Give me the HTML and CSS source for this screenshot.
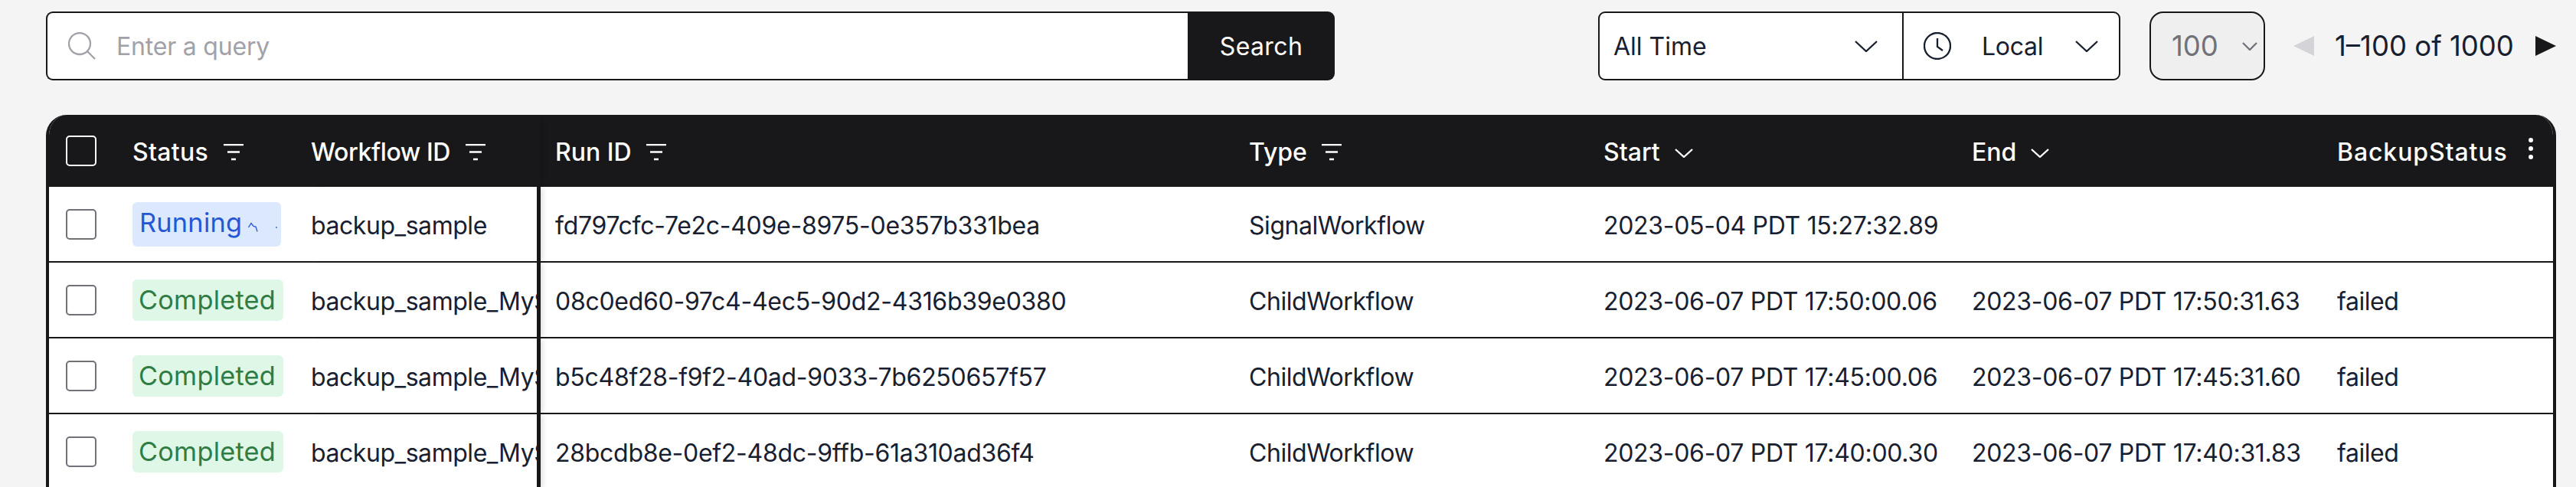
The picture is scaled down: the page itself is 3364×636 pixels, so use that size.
FILE: index.html
```html
<!DOCTYPE html>
<html>
<head>
  <title>Workflows</title>
  <link rel="stylesheet" href="styles.css">
</head>
<body>

  <div class="topbar">
    <div class="search">
      <div class="search-input">
        <svg class="search-icon" viewBox="0 0 36 36"><circle cx="15" cy="15" r="14" /><path d="M25 25l10 10" /></svg>
        <span class="placeholder">Enter a query</span>
      </div>
      <button class="search-btn">Search</button>
    </div>

    <div class="controls">
      <div class="date-filter">
        <div class="range">
          <span>All Time</span>
          <svg class="chev" viewBox="0 0 30 15"><path d="M1 1l14 13L29 1" /></svg>
        </div>
        <div class="zone">
          <svg class="clock" viewBox="0 0 36 36"><circle cx="18" cy="18" r="17" /><path d="M18 8v11l7 5" /></svg>
          <span>Local</span>
          <svg class="chev" viewBox="0 0 30 15"><path d="M1 1l14 13L29 1" /></svg>
        </div>
      </div>

      <div class="per-page">
        <span>100</span>
        <svg viewBox="0 0 20 11"><path d="M1 1l9 9 9-9" /></svg>
      </div>

      <div class="pager">
        <span class="tri prev"></span>
        <span class="pager-text">1–100 of 1000</span>
        <span class="tri next"></span>
      </div>
    </div>
  </div>

  <div class="table-wrap">
    <table>
      <colgroup>
        <col class="c-check"><col class="c-status"><col class="c-wf"><col class="c-run">
        <col class="c-type"><col class="c-start"><col class="c-end"><col class="c-backup">
      </colgroup>
      <thead>
        <tr>
          <th class="check-cell"><span class="box box-head"></span></th>
          <th><span class="head head-status">Status <svg class="filter" viewBox="0 0 26 22"><path d="M0 1h26M5 10.500h16M10 20h6" /></svg></span></th>
          <th class="sticky"><span class="head head-wf">Workflow ID <svg class="filter" viewBox="0 0 26 22"><path d="M0 1h26M5 10.500h16M10 20h6" /></svg></span></th>
          <th class="run-cell"><span class="head">Run ID <svg class="filter" viewBox="0 0 26 22"><path d="M0 1h26M5 10.500h16M10 20h6" /></svg></span></th>
          <th><span class="head">Type <svg class="filter" viewBox="0 0 26 22"><path d="M0 1h26M5 10.500h16M10 20h6" /></svg></span></th>
          <th><span class="head">Start <svg class="sort" viewBox="0 0 24 12"><path d="M1 1l11 10L23 1" /></svg></span></th>
          <th><span class="head">End <svg class="sort" viewBox="0 0 24 12"><path d="M1 1l11 10L23 1" /></svg></span></th>
          <th>
            <span class="head head-last">BackupStatus
              <svg class="kebab" viewBox="0 0 6 28"><circle cx="3" cy="3" r="3" /><circle cx="3" cy="14" r="3" /><circle cx="3" cy="25" r="3" /></svg>
            </span>
          </th>
        </tr>
      </thead>
      <tbody>
        <tr>
          <td class="check-cell"><span class="box"></span></td>
          <td class="status-cell">
            <span class="badge running">Running
              <svg class="spin" viewBox="0 0 38 14"><path d="M0.500 7L4 1.500l3 4 3 0.500 2 6.500" /><circle cx="37" cy="7" r="0.300" /></svg>
            </span>
          </td>
          <td class="sticky">backup_sample</td>
          <td class="run-cell">fd797cfc-7e2c-409e-8975-0e357b331bea</td>
          <td>SignalWorkflow</td>
          <td class="date">2023-05-04 PDT 15:27:32.89</td>
          <td></td>
          <td></td>
        </tr>
        <tr>
          <td class="check-cell"><span class="box"></span></td>
          <td class="status-cell"><span class="badge completed">Completed</span></td>
          <td class="sticky">backup_sample_MyS</td>
          <td class="run-cell">08c0ed60-97c4-4ec5-90d2-4316b39e0380</td>
          <td>ChildWorkflow</td>
          <td class="date">2023-06-07 PDT 17:50:00.06</td>
          <td class="date">2023-06-07 PDT 17:50:31.63</td>
          <td>failed</td>
        </tr>
        <tr>
          <td class="check-cell"><span class="box"></span></td>
          <td class="status-cell"><span class="badge completed">Completed</span></td>
          <td class="sticky">backup_sample_MyS</td>
          <td class="run-cell">b5c48f28-f9f2-40ad-9033-7b6250657f57</td>
          <td>ChildWorkflow</td>
          <td class="date">2023-06-07 PDT 17:45:00.06</td>
          <td class="date">2023-06-07 PDT 17:45:31.60</td>
          <td>failed</td>
        </tr>
        <tr>
          <td class="check-cell"><span class="box"></span></td>
          <td class="status-cell"><span class="badge completed">Completed</span></td>
          <td class="sticky">backup_sample_MyS</td>
          <td class="run-cell">28bcdb8e-0ef2-48dc-9ffb-61a310ad36f4</td>
          <td>ChildWorkflow</td>
          <td class="date">2023-06-07 PDT 17:40:00.30</td>
          <td class="date">2023-06-07 PDT 17:40:31.83</td>
          <td>failed</td>
        </tr>
      </tbody>
    </table>
  </div>

</body>
</html>
```

FILE: styles.css
```css
html, body {
  height: 636px;
  overflow: hidden;
}
body {
  margin: 0;
  padding: 15px 26px 0 60px;
  box-sizing: border-box;
  background: #f4f4f4;
  font-family: Inter, "Liberation Sans", sans-serif;
  font-size: 32px;
  color: #18202f;
}
svg {
  fill: none;
  stroke: currentColor;
  stroke-width: 2.300;
  flex: none;
}

/* top bar */
.topbar {
  display: flex;
  justify-content: space-between;
  height: 90px;
  margin-bottom: 45px;
}
.search {
  display: flex;
  width: 1683px;
}
.search-input {
  display: flex;
  align-items: center;
  gap: 27px;
  flex: 1;
  padding-left: 27px;
  background: #fff;
  border: 2px solid #18181b;
  border-right: none;
  border-radius: 9px 0 0 9px;
}
.search-icon {
  width: 36px;
  height: 36px;
  color: #a1a1aa;
}
.placeholder {
  color: #a1a1aa;
  letter-spacing: -0.2px;
}
.search-btn {
  width: 192px;
  border: none;
  border-radius: 0 9px 9px 0;
  background: #18181b;
  color: #fff;
  font: inherit;
  letter-spacing: 0.4px;
  padding: 0;
}
.controls {
  display: flex;
  align-items: stretch;
}
.date-filter {
  display: flex;
  width: 682px;
  box-sizing: border-box;
  background: #fff;
  border: 2px solid #18181b;
  border-radius: 9px;
}
.range {
  display: flex;
  align-items: center;
  justify-content: space-between;
  width: 397px;
  padding: 0 32px 0 18px;
  box-sizing: border-box;
  border-right: 2px solid #18181b;
}
.zone {
  display: flex;
  align-items: center;
  flex: 1;
  padding-left: 26px;
}
.zone span {
  margin-left: 40px;
  letter-spacing: -0.3px;
}
.zone .chev {
  margin-left: 42px;
}
.chev {
  width: 30px;
  height: 15px;
}
.clock {
  width: 36px;
  height: 36px;
}
.per-page {
  display: flex;
  align-items: center;
  justify-content: space-between;
  width: 151px;
  margin-left: 38px;
  padding: 0 8px 0 27px;
  box-sizing: border-box;
  background: #efefef;
  border: 2px solid #18181b;
  border-radius: 18px;
  font-size: 36.500px;
  color: #71717a;
}
.per-page svg {
  width: 20px;
  height: 11px;
}
.pager {
  display: flex;
  align-items: center;
  margin-left: 37px;
  font-size: 36.500px;
}
.pager-text {
  width: 233px;
  margin: 0 29px 0 27px;
  white-space: nowrap;
}
.tri {
  width: 0;
  height: 0;
  border-top: 13px solid transparent;
  border-bottom: 13px solid transparent;
}
.prev {
  border-right: 27px solid #d4d4d8;
}
.next {
  border-left: 27px solid #18181b;
}

/* table */
.table-wrap {
  width: 3278px;
  height: 490px;
  box-sizing: border-box;
  overflow: hidden;
  background: #fff;
  border: solid #18181b;
  border-width: 0 4px;
  border-radius: 27px 27px 0 0;
}
table {
  width: 3270px;
  table-layout: fixed;
  border-collapse: separate;
  border-spacing: 0;
}
.c-check { width: 109px; }
.c-status { width: 233px; }
.c-wf { width: 300px; }
.c-run { width: 925px; }
.c-type { width: 463px; }
.c-start { width: 481px; }
.c-end { width: 477px; }
.c-backup { width: 282px; }

th {
  height: 94px;
  padding: 0;
  background: #18181b;
  color: #fff;
  font-weight: 500;
  text-align: left;
}
td {
  height: 99px;
  box-sizing: border-box;
  padding: 4px 0 0;
  border-bottom: 2.300px solid #18181b;
  white-space: nowrap;
  overflow: hidden;
  letter-spacing: -0.45px;
}
td.date {
  letter-spacing: -0.3px;
}
td.run-cell {
  letter-spacing: -0.28px;
}
td.check-cell, td.status-cell {
  padding-top: 0;
}
.head {
  display: flex;
  align-items: center;
  gap: 19px;
  padding-top: 3px;
}
.head-status {
  gap: 20px;
  letter-spacing: 0.3px;
}
.head-wf {
  gap: 20px;
  letter-spacing: -0.4px;
}
.head-last {
  gap: 27px;
  letter-spacing: 0.9px;
}
.check-cell {
  padding-left: 22px;
}
.sticky {
  border-right: 5px solid #18181b;
  box-shadow: 5px 0 6px -2px rgba(0, 0, 0, 0.12);
  position: relative;
}
.run-cell {
  padding-left: 19px;
}
.box {
  display: block;
  width: 40px;
  height: 40px;
  box-sizing: border-box;
  background: #fff;
  border: 2.300px solid #71717a;
  border-radius: 5px;
}
.box-head {
  background: none;
  border-color: #fff;
}
.filter {
  width: 26px;
  height: 22px;
}
.sort {
  width: 24px;
  height: 12px;
  margin-top: 3px;
}
.kebab {
  width: 6px;
  height: 28px;
  fill: #fff;
  stroke: none;
  margin-top: -10px;
}
.badge {
  display: inline-flex;
  align-items: center;
  height: 54px;
  padding: 0 9px 0 8px;
  box-sizing: border-box;
  border-radius: 6px;
  font-size: 34.300px;
  font-weight: 400;
  letter-spacing: 0.25px;
  vertical-align: middle;
}
.completed {
  width: 197px;
  background: #dff7e6;
  color: #2f7d44;
}
.running {
  width: 194px;
  height: 58px;
  padding-left: 9px;
  padding-bottom: 5px;
  background: #dbe8fe;
  color: #2457d6;
}
.spin {
  width: 38px;
  height: 14px;
  margin: 14px 0 0 8px;
  stroke-width: 1.300;
}
```
